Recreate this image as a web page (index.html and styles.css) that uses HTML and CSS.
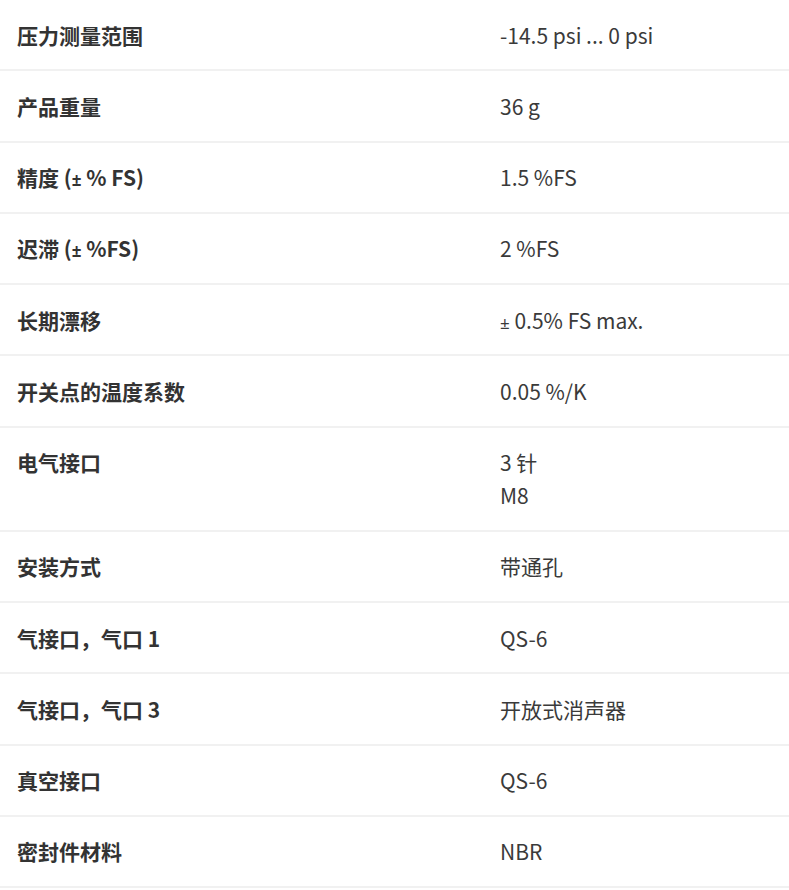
FILE: index.html
```html
<!DOCTYPE html>
<html lang="zh-CN">
<head>
<meta charset="utf-8">
<title>技术参数</title>
<link rel="stylesheet" href="styles.css">
</head>
<body>
<div class="specs">
  <div class="row"><div class="label">压力测量范围</div><div class="value">-14.5 psi ... 0 psi</div></div>
  <div class="row"><div class="label">产品重量</div><div class="value">36 g</div></div>
  <div class="row"><div class="label">精度 (<span class="sym">±</span> % FS)</div><div class="value">1.5 %FS</div></div>
  <div class="row"><div class="label">迟滞 (<span class="sym">±</span> %FS)</div><div class="value">2 %FS</div></div>
  <div class="row"><div class="label">长期漂移</div><div class="value"><span class="sym">±</span> 0.5% FS max.</div></div>
  <div class="row"><div class="label">开关点的温度系数</div><div class="value">0.05 %/K</div></div>
  <div class="row"><div class="label">电气接口</div><div class="value">3 针<br>M8</div></div>
  <div class="row"><div class="label">安装方式</div><div class="value">带通孔</div></div>
  <div class="row"><div class="label">气接口，气口 1</div><div class="value">QS-6</div></div>
  <div class="row"><div class="label">气接口，气口 3</div><div class="value">开放式消声器</div></div>
  <div class="row"><div class="label">真空接口</div><div class="value">QS-6</div></div>
  <div class="row"><div class="label">密封件材料</div><div class="value">NBR</div></div>
</div>
</body>
</html>
```
FILE: styles.css
```css
html, body {
  margin: 0;
  padding: 0;
  background: #ffffff;
}
body {
  font-family: "Noto Sans CJK SC", "Noto Sans", sans-serif;
  font-size: 21px;
  line-height: 33px;
  color: #333333;
}
.specs {
  display: flex;
  flex-direction: column;
}
.row {
  display: grid;
  grid-template-columns: 500px 1fr;
  padding: 18.5px 0 17.75px;
  border-bottom: 2px solid #f1f1f1;
}
.label {
  padding-left: 17px;
  font-weight: 700;
  color: #333333;
}
.value {
  color: #3a3a3a;
}
.sym {
  font-family: "Noto Sans", "Open Sans", sans-serif;
  font-size: 17px;
  line-height: 1;
}
```
